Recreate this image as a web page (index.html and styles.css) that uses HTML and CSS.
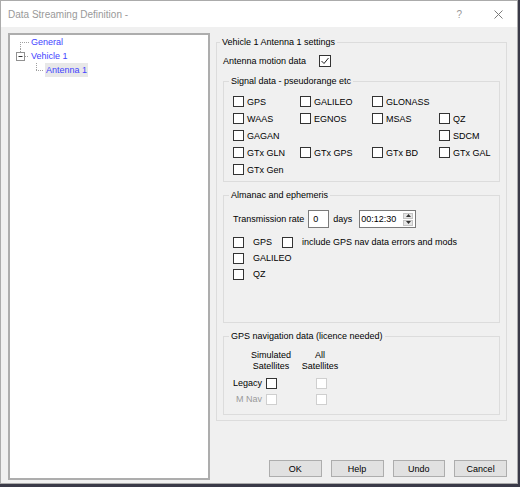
FILE: index.html
```html
<!DOCTYPE html>
<html lang="en">

<head>
    <meta charset="UTF-8">
    <title>Data Streaming Definition</title>
    <link rel="stylesheet" href="styles.css">
</head>

<body>
    <div class="window">
        <div class="titlebar">
            <span class="title">Data Streaming Definition -</span>
            <span class="help">?</span>
            <svg class="close" width="9" height="9" viewBox="0 0 9 9">
                <path d="M0.5 0.5 L8.5 8.5 M8.5 0.5 L0.5 8.5" stroke="#7a7a7a" stroke-width="1" fill="none" />
            </svg>
        </div>

        <div class="client">
            <div class="tree">
                <div class="node">
                    <svg width="20" height="14">
                        <path d="M10.5 7 V14 M10 7.5 H19" stroke="#a0a0a0" stroke-dasharray="1 1" fill="none" />
                    </svg>
                    <span class="label">General</span>
                </div>
                <div class="node">
                    <svg width="20" height="14">
                        <path d="M10.5 0 V3" stroke="#a0a0a0" stroke-dasharray="1 1" fill="none" />
                        <rect x="6.5" y="3.5" width="8" height="8" fill="#fff" stroke="#919191" />
                        <path d="M8.5 7.5 H12.5" stroke="#333" fill="none" />
                        <path d="M15 7.5 H19" stroke="#a0a0a0" stroke-dasharray="1 1" fill="none" />
                    </svg>
                    <span class="label">Vehicle 1</span>
                </div>
                <div class="node">
                    <svg width="35" height="14">
                        <path d="M26.5 0 V7 M26 7.5 H34" stroke="#a0a0a0" stroke-dasharray="1 1" fill="none" />
                    </svg>
                    <span class="label selected">Antenna 1</span>
                </div>
            </div>

            <div class="panel">
                <fieldset class="group outer">
                    <legend>Vehicle 1 Antenna 1 settings</legend>

                    <div class="motion">
                        <span>Antenna motion data</span>
                        <span class="cb big">
                            <svg width="10" height="10" viewBox="0 0 10 10">
                                <path d="M1.5 5 L4 7.5 L8.5 2" stroke="#222" stroke-width="1" fill="none" />
                            </svg>
                        </span>
                    </div>

                    <fieldset class="group sub signal">
                        <legend>Signal data - pseudorange etc</legend>
                        <div class="signal-grid">
                            <div class="opt"><span class="cb"></span>GPS</div>
                            <div class="opt"><span class="cb"></span>GALILEO</div>
                            <div class="opt"><span class="cb"></span>GLONASS</div>
                            <div></div>

                            <div class="opt"><span class="cb"></span>WAAS</div>
                            <div class="opt"><span class="cb"></span>EGNOS</div>
                            <div class="opt"><span class="cb"></span>MSAS</div>
                            <div class="opt"><span class="cb"></span>QZ</div>

                            <div class="opt"><span class="cb"></span>GAGAN</div>
                            <div></div>
                            <div></div>
                            <div class="opt"><span class="cb"></span>SDCM</div>

                            <div class="opt"><span class="cb"></span>GTx GLN</div>
                            <div class="opt"><span class="cb"></span>GTx GPS</div>
                            <div class="opt"><span class="cb"></span>GTx BD</div>
                            <div class="opt"><span class="cb"></span>GTx GAL</div>

                            <div class="opt"><span class="cb"></span>GTx Gen</div>
                        </div>
                    </fieldset>

                    <fieldset class="group sub almanac">
                        <legend>Almanac and ephemeris</legend>
                        <div class="rate">
                            <span>Transmission rate</span>
                            <span class="num">0</span>
                            <span class="days">days</span>
                            <div class="time">
                                <span class="val">00:12:30</span>
                                <div class="spin">
                                    <span class="spin-btn">
                                        <svg width="5" height="3"><path d="M0 3 L2.5 0 L5 3 Z" fill="#333" /></svg>
                                    </span>
                                    <span class="spin-btn">
                                        <svg width="5" height="3"><path d="M0 0 L2.5 3 L5 0 Z" fill="#333" /></svg>
                                    </span>
                                </div>
                            </div>
                        </div>
                        <div class="acheck first">
                            <span class="cb"></span><span class="alabel">GPS</span>
                            <span class="cb second"></span><span class="alabel">include GPS nav data errors and mods</span>
                        </div>
                        <div class="acheck">
                            <span class="cb"></span><span class="alabel">GALILEO</span>
                        </div>
                        <div class="acheck">
                            <span class="cb"></span><span class="alabel">QZ</span>
                        </div>
                    </fieldset>

                    <fieldset class="group sub nav">
                        <legend>GPS navigation data (licence needed)</legend>
                        <div class="nav-head">
                            <div class="sim">Simulated<br>Satellites</div>
                            <div class="all">All<br>Satellites</div>
                        </div>
                        <div class="nav-row first">
                            <span class="nav-label">Legacy</span>
                            <span class="cb"></span>
                            <span class="cb off all-cb"></span>
                        </div>
                        <div class="nav-row">
                            <span class="nav-label muted">M Nav</span>
                            <span class="cb off"></span>
                            <span class="cb off all-cb"></span>
                        </div>
                    </fieldset>
                </fieldset>

                <div class="buttons">
                    <button class="btn">OK</button>
                    <button class="btn">Help</button>
                    <button class="btn">Undo</button>
                    <button class="btn">Cancel</button>
                </div>
            </div>
        </div>
    </div>
</body>

</html>
```

FILE: styles.css
```css
body {
    margin: 0;
    background-color: #3a3a48;
    font-family: "Liberation Sans", Arial, sans-serif;
    font-size: 9px;
    color: #000;
}

.window {
    width: 518px;
    height: 484px;
    box-sizing: border-box;
    border: 1px solid #ababab;
    background-color: #f0f0f0;
    display: flex;
    flex-direction: column;
}

.titlebar {
    height: 26px;
    flex-shrink: 0;
    background-color: #fff;
    display: flex;
    align-items: center;
    padding: 0 14px 0 7px;
}

.title {
    font-size: 10px;
    color: #999;
}

.help {
    margin-left: auto;
    margin-right: 32px;
    font-size: 10px;
    color: #999;
}

.close {
    display: block;
}

.client {
    display: flex;
    padding: 6px 0 0 7px;
}

/* tree view */

.tree {
    width: 202px;
    height: 447px;
    box-sizing: border-box;
    border: 2px solid #adadad;
    background-color: #fff;
}

.node {
    display: flex;
    align-items: center;
    height: 14px;
}

.node svg {
    display: block;
    flex-shrink: 0;
}

.label {
    color: #4343ff;
    line-height: 14px;
    padding: 0 1px;
}

.label.selected {
    background-color: #e8e8e8;
}

/* right panel */

.panel {
    width: 291px;
    margin-left: 6px;
    padding-top: 4px;
}

.group {
    margin: 0;
    min-width: 0;
    border: 1px solid #dcdcdc;
}

.group legend {
    padding: 0 2px;
    margin-left: -3px;
    line-height: 11px;
}

.outer {
    padding: 6px 6px 5px 6px;
}

.sub {
    margin-top: 8px;
    padding: 6px 0 3px 9px;
}

.sub legend {
    margin-left: -4px;
}

.motion {
    display: flex;
    align-items: center;
    height: 14px;
}

.cb {
    width: 11px;
    height: 11px;
    box-sizing: border-box;
    border: 1px solid #333;
    background-color: #fff;
    flex-shrink: 0;
    display: flex;
    align-items: center;
    justify-content: center;
}

.cb.big {
    width: 12px;
    height: 12px;
    margin-left: 13px;
}

.cb.off {
    border-color: #cfcfcf;
}

.signal-grid {
    display: grid;
    grid-template-columns: 67px 72px 67px auto;
    grid-auto-rows: 17px;
    align-items: center;
}

.opt {
    display: flex;
    align-items: center;
    gap: 3px;
}

.almanac {
    padding-top: 9px;
    padding-bottom: 40px;
}

.rate {
    display: flex;
    align-items: center;
    height: 18px;
}

.num {
    width: 21px;
    height: 18px;
    box-sizing: border-box;
    margin-left: 4px;
    padding-left: 4px;
    line-height: 16px;
    border: 1px solid #7a7a7a;
    background-color: #fff;
}

.days {
    margin-left: 4px;
}

.time {
    width: 57px;
    height: 18px;
    box-sizing: border-box;
    margin-left: 7px;
    border: 1px solid #7a7a7a;
    background-color: #fff;
    display: flex;
    align-items: center;
    padding-right: 2px;
}

.time .val {
    flex: 1;
    padding-left: 1px;
}

.spin {
    width: 10px;
    display: flex;
    flex-direction: column;
    gap: 1px;
}

.spin-btn {
    height: 6px;
    background-color: #e6e6e6;
    border: 1px solid #c4c4c4;
    box-sizing: border-box;
    display: flex;
    align-items: center;
    justify-content: center;
}

.spin-btn svg {
    display: block;
}

.acheck {
    display: flex;
    align-items: center;
    height: 16px;
}

.acheck.first {
    margin-top: 6px;
}

.alabel {
    margin-left: 9px;
}

.cb.second {
    margin-left: 10px;
}

.nav {
    padding-top: 8px;
    padding-bottom: 7px;
}

.nav-head {
    display: flex;
    margin-left: 13px;
    line-height: 11px;
    text-align: center;
}

.nav-head .sim {
    width: 50px;
}

.nav-head .all {
    width: 44px;
    margin-left: 2px;
}

.nav-row {
    display: flex;
    align-items: center;
    height: 16px;
}

.nav-row.first {
    margin-top: 3px;
}

.nav-label {
    width: 29px;
    text-align: right;
    margin-right: 4px;
}

.nav-label.muted {
    color: #9a9a9a;
}

.all-cb {
    margin-left: 39px;
}

.buttons {
    display: flex;
    gap: 9px;
    margin-top: 39px;
    padding-left: 53px;
}

.btn {
    width: 54px;
    height: 17px;
    padding: 0;
    font: inherit;
    color: #000;
    background-color: #e1e1e1;
    border: 1px solid #adadad;
}
```
